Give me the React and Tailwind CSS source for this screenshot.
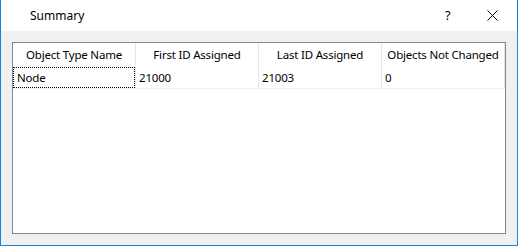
const COLUMNS = ['Object Type Name', 'First ID Assigned', 'Last ID Assigned', 'Objects Not Changed']
const ROW = ['Node', '21000', '21003', '0']

const font = { fontFamily: '"Noto Sans", "Open Sans", sans-serif' }

function CloseIcon() {
  return (
    <svg width="11" height="11" viewBox="0 0 11 11" className="block">
      <path d="M0.5 0.5 L10.5 10.5 M10.5 0.5 L0.5 10.5" stroke="#000" strokeWidth="1" fill="none" />
    </svg>
  )
}

export default function App() {
  return (
    <div
      className="w-[518px] h-[246px] flex flex-col border-x border-b border-[#1883d7] bg-white text-black text-[11.5px] tracking-[-0.2px] leading-none"
      style={font}
    >
      <div className="h-[31px] shrink-0 flex items-center bg-white">
        <span className="pl-[29px] flex-1 text-[12px] tracking-normal">Summary</span>
        <span className="w-[10px] text-[13px] mr-[32px]">?</span>
        <span className="mr-[19px]"><CloseIcon /></span>
      </div>

      <div className="flex-1 bg-[#f0f0f0] p-[11px] flex">
        <div className="flex-1 border border-[#828790] bg-white flex flex-col">
          <div className="flex h-[24px]">
            {COLUMNS.map((c) => (
              <div key={c} className="w-[123px] shrink-0 border-r border-[#e5e5e5] flex items-center justify-center whitespace-nowrap overflow-hidden">
                {c}
              </div>
            ))}
          </div>
          <div className="flex h-[22px] border-b border-[#f0f0f0]">
            {ROW.map((v, i) => (
              <div key={i} className="w-[123px] shrink-0 border-r border-[#e5e5e5] flex">
                <div className={`flex-1 flex items-center pl-[3px] ${i === 0 ? 'border border-dotted border-black pl-[2px]' : ''}`}>
                  {v}
                </div>
              </div>
            ))}
          </div>
        </div>
      </div>
    </div>
  )
}
